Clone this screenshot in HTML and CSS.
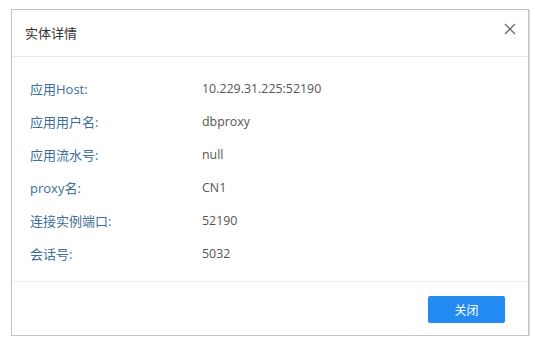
FILE: index.html
```html
<!DOCTYPE html>
<html lang="zh-CN">
<head>
    <meta charset="UTF-8">
    <title>实体详情</title>
    <link rel="stylesheet" href="styles.css">
</head>
<body>
    <div class="dialog">
        <div class="dialog-header">
            <span class="dialog-title">实体详情</span>
            <span class="close">
                <svg width="12" height="12" viewBox="0 0 12 12"><path d="M1 1L11 11M11 1L1 11" stroke="#666a70" stroke-width="1.3" fill="none"/></svg>
            </span>
        </div>
        <div class="dialog-body">
            <div class="row"><span class="label">应用Host:</span><span class="value">10.229.31.225:52190</span></div>
            <div class="row"><span class="label">应用用户名:</span><span class="value">dbproxy</span></div>
            <div class="row"><span class="label">应用流水号:</span><span class="value">null</span></div>
            <div class="row"><span class="label">proxy名:</span><span class="value">CN1</span></div>
            <div class="row"><span class="label">连接实例端口:</span><span class="value">52190</span></div>
            <div class="row"><span class="label">会话号:</span><span class="value">5032</span></div>
        </div>
        <div class="dialog-footer">
            <button class="btn-close">关闭</button>
        </div>
    </div>
</body>
</html>
```

FILE: styles.css
```css
body {
    margin: 0;
    background-color: white;
    font-family: "Open Sans", "Noto Sans CJK SC", sans-serif;
    font-size: 13px;
}
.dialog {
    margin: 9px 0 0 11px;
    width: 516px;
    height: 325px;
    border: 1px solid #c4c4c4;
    box-shadow: 1px 1px 0 #dcdcdc;
    display: flex;
    flex-direction: column;
}
.dialog-header {
    height: 46px;
    border-bottom: 1px solid #e3e9ef;
    display: flex;
    align-items: center;
    justify-content: space-between;
    padding: 0 12px 0 13px;
}
.dialog-title {
    color: #333;
    font-size: 13px;
    margin-top: -2px;
}
.close {
    display: flex;
    margin-top: -8px;
    cursor: pointer;
}
.dialog-body {
    flex: 1;
    padding: 15px 0 0 18px;
}
.row {
    display: flex;
    height: 33px;
    align-items: center;
}
.label {
    width: 172px;
    color: #3c6e96;
}
.value {
    color: #555;
    font-size: 12.4px;
}
.dialog-footer {
    height: 53px;
    border-top: 1px solid #ececec;
    display: flex;
    align-items: center;
    justify-content: flex-end;
    padding-right: 23px;
}
.btn-close {
    width: 77px;
    height: 27px;
    background-color: #228af0;
    color: white;
    border: none;
    border-radius: 2px;
    font-family: "Noto Sans CJK SC", sans-serif;
    font-size: 12px;
    cursor: pointer;
    margin-top: 2px;
}
```
